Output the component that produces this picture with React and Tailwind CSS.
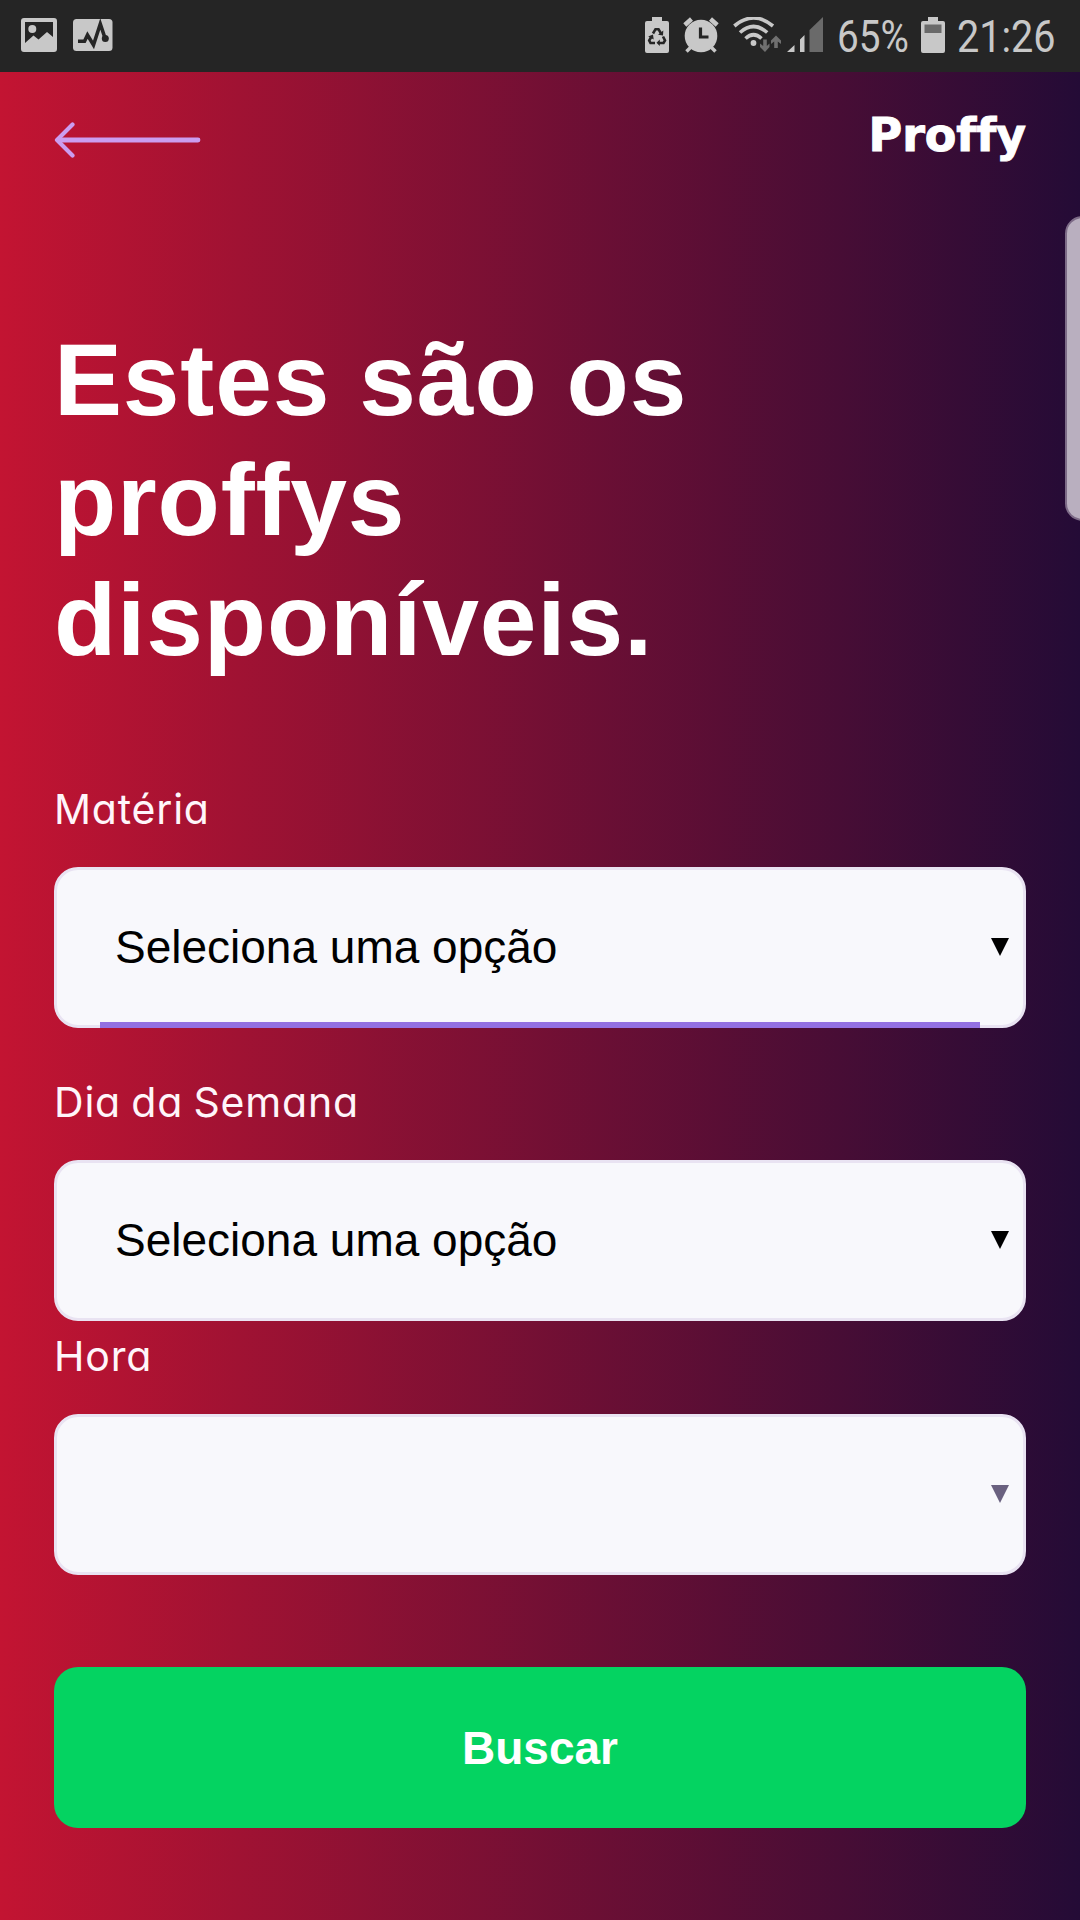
import React from "react";

function PictureIcon() {
  return (
    <svg className="ml-[21px] h-[34px] w-9 shrink-0" viewBox="0 0 36 34" aria-hidden="true">
      <path
        fillRule="evenodd"
        fill="#c8c8c8"
        d="M3 0H33Q36 0 36 3V31Q36 34 33 34H3Q0 34 0 31V3Q0 0 3 0ZM4 4V25L12.500 17.500L17.500 21.500L26 14L32 19V4Z"
      />
      <circle cx="11.300" cy="11" r="4" fill="#c8c8c8" />
    </svg>
  );
}

function PulseIcon() {
  return (
    <svg className="ml-4 h-8 w-10 shrink-0" viewBox="0 0 40 32" aria-hidden="true">
      <rect width="39.500" height="32" rx="3.500" fill="#c8c8c8" />
      <path d="M5 22.300H11.500L14.500 16L20.500 26L27.300 5L32 19" fill="none" stroke="#252525" strokeWidth="3.600" />
      <circle cx="32.300" cy="19.500" r="3.500" fill="#252525" />
    </svg>
  );
}

function RecycleBatteryIcon() {
  return (
    <svg className="h-9 w-6 shrink-0" viewBox="0 0 24 36" aria-hidden="true">
      <path d="M7 0H17V4H22Q24 4 24 6V34Q24 36 22 36H2Q0 36 0 34V6Q0 4 2 4H7Z" fill="#c8c8c8" />
      <g fill="none" stroke="#252525" strokeWidth="2.600">
        <path d="M8 16.500L10.500 12.200H13.500L16 16.500" />
        <path d="M18 19.500L20 23.500L18.500 26H13.500" />
        <path d="M10 26H5.500L4.200 23.500L6.500 19.500" />
      </g>
      <path d="M13 17.800L18 18.500L18.300 13.500ZM14.800 22.500V29L11.500 25.800ZM3.200 19.500L8 17.500L8.700 22.500Z" fill="#252525" />
    </svg>
  );
}

function AlarmIcon() {
  return (
    <svg className="ml-[14px] h-9 w-9 shrink-0" viewBox="0 0 36 36" aria-hidden="true">
      <circle cx="18" cy="19" r="16.300" fill="#c8c8c8" />
      <g stroke="#c8c8c8" strokeWidth="4.500">
        <path d="M1.800 8L8.500 2M27.500 2L34.200 8" />
        <path d="M3.500 34.500L8 30M28 30L32.500 34.500" strokeWidth="3.500" />
      </g>
      <path d="M17.500 10.500V20H25.500" fill="none" stroke="#252525" strokeWidth="3.200" />
    </svg>
  );
}

function WifiIcon() {
  return (
    <svg className="ml-[14px] h-9 w-[49px] shrink-0" viewBox="0 0 49 36" aria-hidden="true">
      <g fill="none" stroke="#c8c8c8" strokeWidth="3.600">
        <path d="M1.300 9Q20.500 -7 40 9" />
        <path d="M7 15.500Q20.500 3.500 34.200 15.500" />
        <path d="M12.500 21.500Q20.500 14 28.500 21.500" />
      </g>
      <circle cx="20.500" cy="26" r="2.900" fill="#c8c8c8" />
      <path d="M30.200 22.500H33.800V29L36.500 26.500V30L32 35L27 30V26.500L30.200 29Z" fill="#707070" />
      <path d="M41.200 31H44.800V24.500L48 27V23.500L43 18.500L38 23.500V27L41.200 24.500Z" fill="#707070" />
    </svg>
  );
}

function SignalIcon() {
  return (
    <svg className="ml-[5px] h-9 w-9 shrink-0" viewBox="0 0 36 36" aria-hidden="true">
      <path d="M0 35L7.500 28V35ZM13 22.500L17.500 18V35H13Z" fill="#c8c8c8" />
      <path d="M22.500 13L36 0V35H22.500Z" fill="#6a6a6a" />
    </svg>
  );
}

function BatteryIcon() {
  return (
    <svg className="ml-3 h-9 w-6 shrink-0" viewBox="0 0 24 36" aria-hidden="true">
      <path d="M7 0H17V4H22Q24 4 24 6V34Q24 36 22 36H2Q0 36 0 34V6Q0 4 2 4H7Z" fill="#c8c8c8" />
      <rect x="3.500" y="7.500" width="17" height="8.500" fill="#6a6a6a" />
    </svg>
  );
}

function StatusBar() {
  return (
    <div className="flex h-[72px] items-center bg-[#252525] pb-[2px] font-['Roboto',sans-serif] text-[45px] leading-none text-[#c8c8c8]">
      <PictureIcon />
      <PulseIcon />
      <div className="ml-auto flex items-center">
        <RecycleBatteryIcon />
        <AlarmIcon />
        <WifiIcon />
        <SignalIcon />
        <span className="ml-[14px] w-[72px] origin-left scale-x-[0.86] whitespace-nowrap pt-[3px]">65%</span>
        <BatteryIcon />
        <span className="ml-3 w-[123px] origin-left scale-x-[0.88] whitespace-nowrap pt-[3px]">21:26</span>
      </div>
    </div>
  );
}

function Field({ label, value = "", focused = false, muted = false }) {
  return (
    <div className="flex flex-col">
      <label className="h-[82px] font-['Inter','Liberation_Sans',sans-serif] text-[41px] leading-[49px] tracking-[0.8px] text-[#fff5fa] [font-feature-settings:'cv11'] [word-spacing:-2px]">
        {label}
      </label>
      <div className="relative flex h-[161px] items-center justify-between rounded-[24px] border-[3px] border-[#e9e3f2] bg-[#f8f8fc] pr-[14px] pb-[2px] pl-[58px]">
        <span className="text-[46px] leading-none text-black">{value}</span>
        <svg className={muted ? "h-[18px] w-[18px] text-[#6a6180]" : "h-[18px] w-[18px] text-black"} viewBox="0 0 18 18" aria-hidden="true">
          <path d="M0 0H18L9 18Z" fill="currentColor" />
        </svg>
        {focused && <span className="absolute right-[43px] -bottom-[3px] left-[43px] h-[6px] bg-[#9370e2]" />}
      </div>
    </div>
  );
}

export default function App() {
  return (
    <div className="relative h-[1920px] w-[1080px] overflow-hidden bg-linear-to-r/srgb from-[#c31432] to-[#240b36] font-['Liberation_Sans',Arial,sans-serif]">
      <StatusBar />
      <header className="flex h-[136px] items-start justify-between px-[54px]">
        <svg className="mt-[50px] h-9 w-[148px]" viewBox="0 0 148 36" fill="none" stroke="#cb9df0" strokeLinecap="round" aria-hidden="true">
          <path d="M4 18H144" strokeWidth="4.800" />
          <path d="M18.500 2.500L3 18L18.500 33.500" strokeWidth="4.200" strokeLinejoin="round" />
        </svg>
        <span className="mt-[36px] font-['DejaVu_Sans',sans-serif] text-[46px] leading-[54px] font-bold tracking-[-0.1px] text-white [-webkit-text-stroke:1px_white]">Proffy</span>
      </header>
      <main className="flex flex-col px-[54px]">
        <h1 className="mt-[112px] w-[760px] text-[102px] leading-[120px] font-bold tracking-[0.8px] text-white">
          Estes são os
          <br />
          proffys
          <br />
          disponíveis.
        </h1>
        <form className="mt-[105px] flex flex-col">
          <Field label="Matéria" value="Seleciona uma opção" focused />
          <div className="mt-[50px]">
            <Field label="Dia da Semana" value="Seleciona uma opção" />
          </div>
          <div className="mt-[11px]">
            <Field label="Hora" muted />
          </div>
          <button type="button" className="mt-[92px] h-[161px] rounded-[24px] bg-[#04d361] text-[46px] leading-none font-bold text-white">
            Buscar
          </button>
        </form>
      </main>
      <div className="absolute top-[216px] -right-5 h-[305px] w-[35px] rounded-[20px] border-2 border-[#7d6b87] bg-[#b9afbf]" />
    </div>
  );
}
